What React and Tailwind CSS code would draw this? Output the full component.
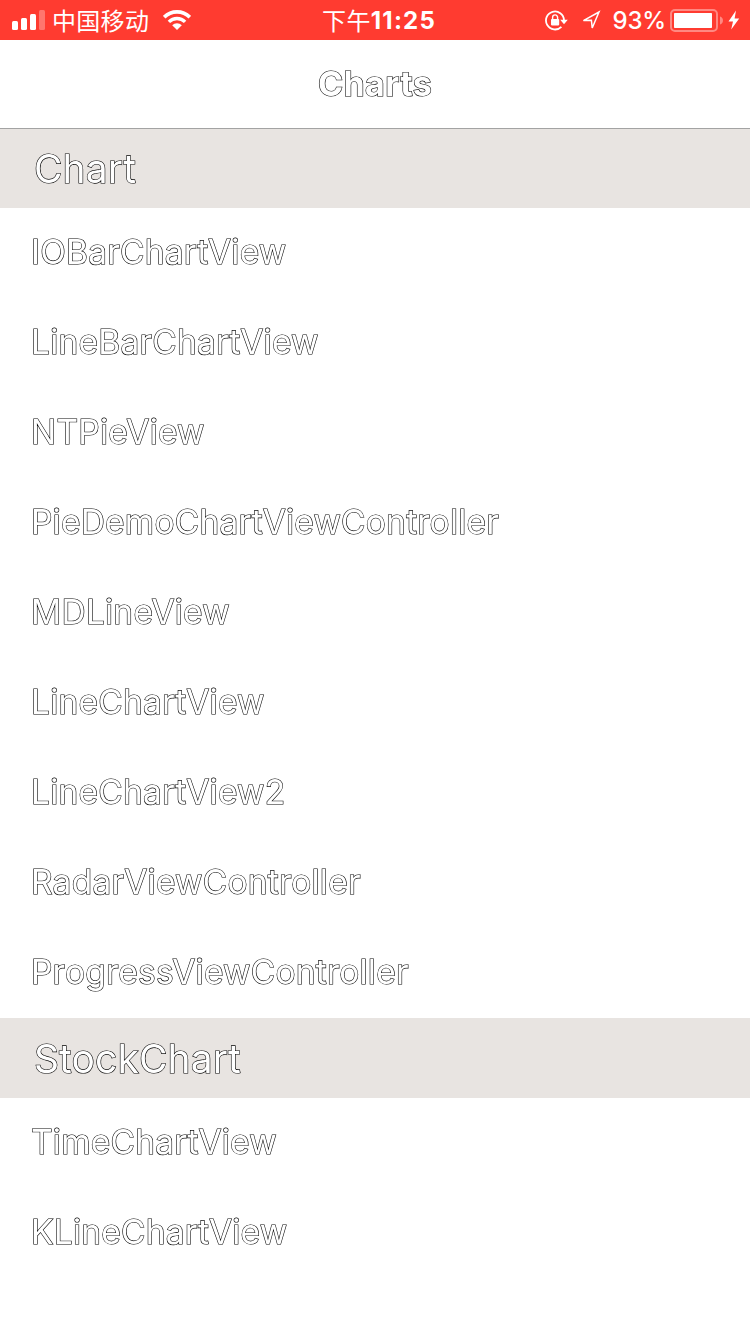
import React from "react";

const outline = "text-white antialiased will-change-transform [paint-order:stroke_fill] [-webkit-text-stroke:1.2px_#000]";

const sections = [
  {
    title: "Chart",
    rows: [
      "IOBarChartView",
      "LineBarChartView",
      "NTPieView",
      "PieDemoChartViewController",
      "MDLineView",
      "LineChartView",
      "LineChartView2",
      "RadarViewController",
      "ProgressViewController",
    ],
  },
  { title: "StockChart", rows: ["TimeChartView", "KLineChartView"] },
];

function Signal() {
  return (
    <svg width="34" height="20" viewBox="0 0 34 20" fill="#fff" className="shrink-0">
      <rect x="0" y="11" width="6" height="9" rx="1.5" />
      <rect x="9" y="8" width="6" height="12" rx="1.5" />
      <rect x="18" y="4" width="6" height="16" rx="1.5" />
      <rect x="27" y="0" width="6" height="20" rx="1.5" opacity="0.3" />
    </svg>
  );
}

function Wifi() {
  return (
    <svg width="28" height="20" viewBox="0 0 28 20" className="shrink-0" fill="none" stroke="#fff">
      <path d="M1.2 7.2 A18 18 0 0 1 26.8 7.2" strokeWidth="3.6" />
      <path d="M5.9 11.9 A11.5 11.5 0 0 1 22.1 11.9" strokeWidth="3.4" />
      <path d="M14 20 L9.2 15.3 A6.8 6.8 0 0 1 18.8 15.3 Z" fill="#fff" stroke="none" />
    </svg>
  );
}

function RotationLock() {
  return (
    <svg width="23" height="21" viewBox="0 0 23 21" className="shrink-0" fill="none" stroke="#fff">
      <path d="M16.4 16.8 A9 9 0 1 1 19 10.2" strokeWidth="1.8" />
      <path d="M15.2 9.8 H22.8 L19 14.2 Z" fill="#fff" stroke="none" />
      <rect x="6" y="9" width="8.2" height="6.4" rx="0.8" fill="#fff" stroke="none" />
      <path d="M7.6 9.5 V7.4 A2.5 2.5 0 0 1 12.6 7.4 V9.5" strokeWidth="1.4" />
    </svg>
  );
}

function Location() {
  return (
    <svg width="20" height="20" viewBox="0 0 20 20" className="shrink-0" fill="none" stroke="#fff">
      <path d="M18 2 L2.4 10.6 L10.4 10.2 L11.2 18 Z" strokeWidth="1.5" strokeLinejoin="miter" />
    </svg>
  );
}

function Battery() {
  return (
    <svg width="54" height="24" viewBox="0 0 54 24" className="shrink-0">
      <rect x="1" y="2" width="46" height="21" rx="4" fill="none" stroke="#fff" strokeOpacity="0.4" strokeWidth="2" />
      <rect x="4" y="5" width="38" height="15" rx="0.8" fill="#fff" />
      <path d="M50 8.5 A4.2 4.2 0 0 1 50 16.5 Z" fill="#fff" opacity="0.4" />
    </svg>
  );
}

function Bolt() {
  return (
    <svg width="12" height="20" viewBox="0 0 12 20" className="shrink-0" fill="#fff">
      <path d="M8 0.5 L0.5 11.4 H5 L3.2 19.5 L11.2 8.4 H6.6 Z" />
    </svg>
  );
}

function StatusBar() {
  return (
    <header className="grid h-10 grid-cols-3 items-center bg-[#ff3b30] text-2xl leading-none text-white">
      <div className="flex items-center pl-3">
        <Signal />
        <span className="ml-1.5 font-['Noto_Sans_CJK_SC',sans-serif] tracking-[0.3px]">中国移动</span>
        <span className="ml-3.5 flex"><Wifi /></span>
      </div>
      <div className="flex items-center justify-center pl-2">
        <span className="font-['Noto_Sans_CJK_SC',sans-serif] tracking-[0.4px]">下午</span>
        <span className="pt-px font-['Inter',sans-serif] text-[24px] font-bold tracking-[1.2px]">11:25</span>
      </div>
      <div className="flex items-center justify-end pr-2.5">
        <RotationLock />
        <span className="ml-[13px] flex"><Location /></span>
        <span className="ml-3 pt-0.5 font-['Inter',sans-serif] text-[24px] font-medium tracking-[-0.2px]">93%</span>
        <span className="ml-1 flex"><Battery /></span>
        <span className="ml-1 flex"><Bolt /></span>
      </div>
    </header>
  );
}

export default function App() {
  return (
    <div className="flex h-[1334px] w-[750px] flex-col overflow-hidden bg-white font-['Inter',sans-serif]">
      <StatusBar />
      <nav className="flex h-[89px] items-center justify-center border-b border-[#a3a3a3]">
        <h1 className={`${outline} text-[34px] font-bold leading-none tracking-[0.4px]`}>Charts</h1>
      </nav>
      <main>
        {sections.map((section, i) => (
          <section key={section.title}>
            <h2
              className={`${outline} flex items-center bg-[#e8e4e1] pl-[34px] text-[39px] leading-none tracking-[0.1px] ${
                i === 0 ? "h-[79px]" : "h-20"
              }`}
            >
              {section.title}
            </h2>
            <ul>
              {section.rows.map((row) => (
                <li key={row} className="flex h-[90px] items-center pl-[31px]">
                  <span className={`${outline} text-[33.5px] leading-none tracking-[0.22px]`}>{row}</span>
                </li>
              ))}
            </ul>
          </section>
        ))}
      </main>
    </div>
  );
}
